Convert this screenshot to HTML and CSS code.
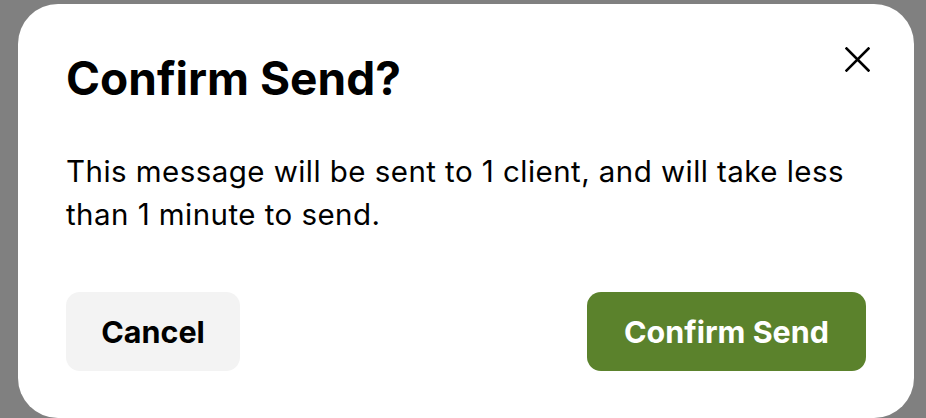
FILE: index.html
```html
<!DOCTYPE html>
<html lang="en">
<head>
  <meta charset="UTF-8">
  <meta name="viewport" content="width=device-width, initial-scale=1.0">
  <title>Confirm Send</title>
  <link rel="stylesheet" href="styles.css">
</head>
<body>
  <div class="modal">
    <div class="modal-header">
      <h1>Confirm Send?</h1>
      <button class="close-btn" aria-label="Close">
        <svg width="25" height="25" viewBox="0 0 25 25">
          <path d="M1.5 1.5 L23.5 23.5 M23.5 1.5 L1.5 23.5" stroke="#000" stroke-width="2.6" stroke-linecap="square" fill="none"/>
        </svg>
      </button>
    </div>

    <p class="message">This message will be sent to 1 client, and will take less than 1 minute to send.</p>

    <div class="actions">
      <button class="btn btn-cancel">Cancel</button>
      <button class="btn btn-primary">Confirm Send</button>
    </div>
  </div>
</body>
</html>
```

FILE: styles.css
```css
* {
  box-sizing: border-box;
  margin: 0;
  padding: 0;
}

body {
  font-family: Inter, 'Noto Sans', sans-serif;
  background: #808080;
  color: #000;
  height: 418px;
  overflow: hidden;
  padding: 4px 12px 0 18px;
}

.modal {
  background: #fff;
  border-radius: 40px;
  height: 414px;
  padding: 47px 48px 47px 48px;
  display: flex;
  flex-direction: column;
}

.modal-header {
  display: flex;
  justify-content: space-between;
  align-items: flex-start;
}

h1 {
  font-size: 46px;
  font-weight: 700;
  line-height: 1.2;
}

.close-btn {
  background: none;
  border: none;
  margin-top: -4px;
  margin-right: -4px;
  cursor: pointer;
}

.close-btn svg {
  display: block;
}

.message {
  font-size: 29.5px;
  line-height: 43px;
  letter-spacing: 0.45px;
  margin-top: 44px;
  padding-right: 8px;
}

.actions {
  margin-top: auto;
  display: flex;
  justify-content: space-between;
}

.btn {
  font-family: inherit;
  font-size: 30.5px;
  font-weight: 700;
  height: 79px;
  border: none;
  border-radius: 14px;
  cursor: pointer;
}

.btn-cancel {
  width: 174px;
  background: #f3f3f3;
  color: #000;
}

.btn-primary {
  width: 279px;
  background: #5b822c;
  color: #fff;
}
```
